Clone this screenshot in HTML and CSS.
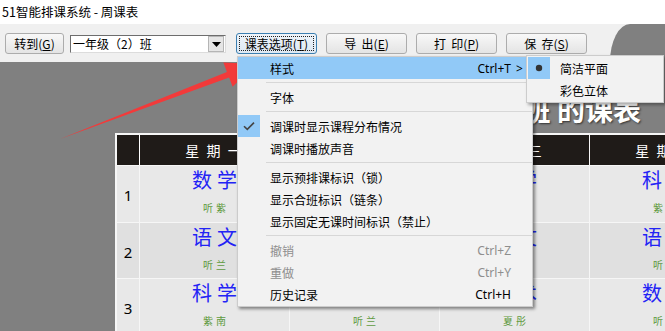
FILE: index.html
```html
<!DOCTYPE html>
<html lang="zh-CN">
<head>
<meta charset="utf-8">
<title>51智能排课系统 - 周课表</title>
<link rel="stylesheet" href="styles.css">
</head>
<body>
<div class="window">
  <div class="titlebar">51智能排课系统 - 周课表</div>
  <div class="toolbar">
    <button class="btn btn-goto">转到(<u>G</u>)</button>
    <div class="select"><span class="select-text">一年级（2）班</span><span class="select-arrow"><svg width="9" height="5" viewBox="0 0 9 5"><path d="M0 0H9L4.5 5Z" fill="#000"/></svg></span></div>
    <button class="btn btn-focus">课表选项(<u>T</u>)</button>
    <button class="btn">导&nbsp;&nbsp;出(<u>E</u>)</button>
    <button class="btn">打&nbsp;&nbsp;印(<u>P</u>)</button>
    <button class="btn">保&nbsp;&nbsp;存(<u>S</u>)</button>
    <div class="corner"></div>
  </div>
  <div class="canvas">
    <div class="heading">一年级（2）班 的课表</div>
    <div class="timetable">
      <div class="th"></div>
      <div class="th">星 期 一</div>
      <div class="th">星 期 二</div>
      <div class="th">星 期 三</div>
      <div class="th">星 期 四</div>
      <div class="th">星 期 五</div>

      <div class="num r1">1</div>
      <div class="cell r1"><span class="subj">数学</span><span class="teacher">听紫</span></div>
      <div class="cell r1"><span class="subj">语文</span><span class="teacher">听兰</span></div>
      <div class="cell r1"><span class="subj">科学</span><span class="teacher">紫南</span></div>
      <div class="cell r1"><span class="subj">科学</span><span class="teacher">紫南</span></div>
      <div class="cell r1"><span class="subj">语文</span><span class="teacher">听兰</span></div>

      <div class="num r2">2</div>
      <div class="cell r2"><span class="subj">语文</span><span class="teacher">听兰</span></div>
      <div class="cell r2"><span class="subj">数学</span><span class="teacher">听紫</span></div>
      <div class="cell r2"><span class="subj">语文</span><span class="teacher">听兰</span></div>
      <div class="cell r2"><span class="subj">语文</span><span class="teacher">听兰</span></div>
      <div class="cell r2"><span class="subj">数学</span><span class="teacher">听紫</span></div>

      <div class="num r3">3</div>
      <div class="cell r3"><span class="subj">科学</span><span class="teacher">紫南</span></div>
      <div class="cell r3"><span class="subj">语文</span><span class="teacher">听兰</span></div>
      <div class="cell r3"><span class="subj">美术</span><span class="teacher">夏彤</span></div>
      <div class="cell r3"><span class="subj">数学</span><span class="teacher">听紫</span></div>
      <div class="cell r3"><span class="subj">科学</span><span class="teacher">紫南</span></div>
    </div>
  </div>

  <svg class="arrow" width="665" height="331" viewBox="0 0 665 331">
    <polygon points="60,139 226.9,71.9 223.4,62.6 256,64 232.6,86.8 229.1,77.5" fill="#f23a3a"/>
  </svg>

  <div class="menu">
    <div class="item hl"><span class="ico"></span><span class="label">样式</span><span class="key">Ctrl+T</span><span class="sub">&gt;</span></div>
    <div class="sep"></div>
    <div class="item"><span class="ico"></span><span class="label">字体</span><span class="key"></span><span class="sub"></span></div>
    <div class="sep"></div>
    <div class="item"><span class="ico checked"><svg width="12" height="10" viewBox="0 0 12 10"><path d="M1 5.2L4.3 8.4L11 1.6" fill="none" stroke="#444" stroke-width="1.6"/></svg></span><span class="label">调课时显示课程分布情况</span><span class="key"></span><span class="sub"></span></div>
    <div class="item"><span class="ico"></span><span class="label">调课时播放声音</span><span class="key"></span><span class="sub"></span></div>
    <div class="sep"></div>
    <div class="item"><span class="ico"></span><span class="label">显示预排课标识（锁）</span><span class="key"></span><span class="sub"></span></div>
    <div class="item"><span class="ico"></span><span class="label">显示合班标识（链条）</span><span class="key"></span><span class="sub"></span></div>
    <div class="item"><span class="ico"></span><span class="label">显示固定无课时间标识（禁止）</span><span class="key"></span><span class="sub"></span></div>
    <div class="sep"></div>
    <div class="item disabled"><span class="ico"></span><span class="label">撤销</span><span class="key">Ctrl+Z</span><span class="sub"></span></div>
    <div class="item disabled"><span class="ico"></span><span class="label">重做</span><span class="key">Ctrl+Y</span><span class="sub"></span></div>
    <div class="item"><span class="ico"></span><span class="label">历史记录</span><span class="key">Ctrl+H</span><span class="sub"></span></div>
  </div>

  <div class="submenu">
    <div class="item"><span class="ico checked"><svg width="8" height="8" viewBox="0 0 8 8"><circle cx="4" cy="4" r="3.2" fill="#333"/></svg></span><span class="label">简洁平面</span></div>
    <div class="item"><span class="ico"></span><span class="label">彩色立体</span></div>
  </div>
</div>
</body>
</html>
```

FILE: styles.css
```css
* { box-sizing: border-box; }
html, body { margin: 0; padding: 0; }
body {
  width: 665px;
  height: 331px;
  overflow: hidden;
  font-family: "Noto Sans CJK SC", "Noto Sans", sans-serif;
  font-size: 12px;
  color: #000;
}
.window {
  position: relative;
  width: 665px;
  height: 331px;
  display: flex;
  flex-direction: column;
  overflow: hidden;
}
.titlebar {
  height: 24px;
  line-height: 24px;
  background: #fff;
  padding-left: 2px;
  font-size: 12.5px;
  white-space: nowrap;
}
.toolbar {
  position: relative;
  height: 38px;
  background: #f0f0f0;
  display: flex;
  align-items: flex-start;
  padding: 9px 0 0 5px;
}
.btn {
  position: relative;
  height: 21px;
  width: 81px;
  margin: 0 9px 0 0;
  padding: 0;
  border: 1px solid #acacac;
  border-radius: 3px;
  background: linear-gradient(#f8f8f8, #e4e4e4);
  font-family: "Noto Sans CJK SC", "Noto Sans", sans-serif;
  font-size: 12px;
  line-height: 18px;
  color: #000;
  white-space: nowrap;
}
.btn u { text-underline-offset: 1px; }
.btn-goto { width: 59px; margin-right: 6px; }
.btn-focus {
  border-color: #3c7fb1;
  background: linear-gradient(#eef4fa, #dde8f3);
}
.btn-focus::after {
  content: "";
  position: absolute;
  inset: 2px;
  border: 1px dotted #222;
}
.select {
  width: 156px;
  height: 18px;
  margin: 2px 10px 0 0;
  background: #fff;
  border: 1px solid;
  border-color: #6d6d6d #dcdcdc #dcdcdc #6d6d6d;
  display: flex;
  align-items: center;
  padding-left: 2px;
}
.select-text { flex: 1; line-height: 16px; white-space: nowrap; }
.select-arrow {
  width: 16px;
  height: 16px;
  margin-right: 1px;
  background: #e6e6e6;
  border: 1px solid #b5b5b5;
  display: flex;
  align-items: center;
  justify-content: center;
}
.corner {
  position: absolute;
  left: 610px;
  top: 0;
  right: 0;
  bottom: 0;
  background: #808080;
  border-top-left-radius: 20px 38px;
}
.canvas {
  flex: 1;
  background: #808080;
  overflow: hidden;
}
.heading {
  margin-top: 30px;
  height: 34px;
  padding-left: 366px;
  font-size: 28px;
  font-weight: bold;
  line-height: 34px;
  color: #fff;
  white-space: nowrap;
  text-shadow: 1px 1px 2px #333;
}
.timetable {
  margin: 7px 0 0 115px;
  display: grid;
  grid-template-columns: 22px repeat(5, 149px);
  grid-template-rows: 30px 56px 55px 56px;
  gap: 1px;
  padding: 2px 0 0 2px;
  background: #f6f6f6;
  width: max-content;
}
.th {
  background: #1f1b18;
  color: #fff;
  font-size: 14px;
  letter-spacing: 2px;
  display: flex;
  align-items: center;
  justify-content: center;
  white-space: nowrap;
}
.timetable .th:first-child { border-right: 1px solid #fff; margin-right: -1px; }
.r1, .r3 { background: #e8e8e8; }
.r2 { background: #e0e0e0; }
.num {
  display: flex;
  align-items: center;
  justify-content: center;
  font-family: "Noto Sans", sans-serif;
  font-size: 15px;
  padding-top: 2px;
}
.cell {
  display: flex;
  flex-direction: column;
  align-items: center;
  padding-top: 2px;
}
.subj {
  font-size: 20px;
  line-height: 24px;
  color: #2323f5;
  letter-spacing: 5px;
  margin-right: -5px;
  white-space: nowrap;
}
.teacher {
  margin-top: 9px;
  font-size: 10px;
  line-height: 14px;
  color: #5f9a40;
  letter-spacing: 3px;
  margin-right: -3px;
  white-space: nowrap;
}
.arrow {
  position: absolute;
  left: 0;
  top: 0;
  pointer-events: none;
}
.menu {
  position: absolute;
  left: 237px;
  top: 56px;
  width: 296px;
  padding: 0 0 1px 0;
  background: #f2f2f2;
  border: 1px solid #cccccc;
  box-shadow: 2px 2px 3px rgba(0, 0, 0, 0.45);
}
.item {
  height: 22px;
  display: flex;
  align-items: center;
  white-space: nowrap;
}
.item.hl { background: #91c9f7; }
.item.disabled { color: #8e8e8e; }
.ico {
  width: 22px;
  height: 22px;
  margin-right: 10px;
  display: flex;
  align-items: center;
  justify-content: center;
}
.ico.checked { background: #91c9f7; }
.label { flex: 1; }
.key {
  font-family: "Noto Sans", sans-serif;
  font-size: 12px;
}
.sub {
  width: 21px;
  padding-left: 5px;
  text-align: left;
  font-family: "Noto Sans", sans-serif;
  font-size: 12px;
}
.sep {
  height: 7px;
  display: flex;
  align-items: center;
  padding-left: 28px;
}
.sep::before {
  content: "";
  flex: 1;
  height: 1px;
  background: #d7d7d7;
}
.submenu {
  position: absolute;
  left: 526px;
  top: 55px;
  width: 138px;
  padding: 1px 0 1px 1px;
  background: #f2f2f2;
  border: 1px solid #cccccc;
  box-shadow: 2px 2px 3px rgba(0, 0, 0, 0.35);
}
.submenu .ico { margin-right: 10px; }
```
